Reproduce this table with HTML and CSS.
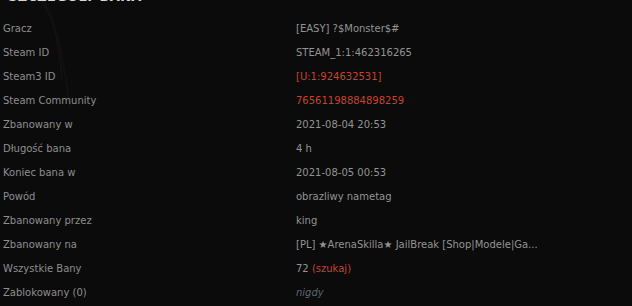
FILE: index.html
```html
<!DOCTYPE html>
<html lang="pl">
<head>
    <meta charset="UTF-8">
    <meta name="viewport" content="width=device-width, initial-scale=1.0">
    <title>Szczegóły bana</title>
    <link rel="stylesheet" href="styles.css">
</head>
<body>
    <div class="panel">
        <svg class="swirl" width="160" height="120" viewBox="0 0 160 120">
            <path d="M36 0 C 50 20, 60 40, 70 120" />
            <path d="M40 10 C 52 25, 58 45, 62 90" />
        </svg>
        <h2 class="title">SZCZEGÓŁY BANA</h2>

        <div class="details">
            <div class="row"><span class="label">Gracz</span><span class="value">[EASY] ?$Monster$#</span></div>
            <div class="row"><span class="label">Steam ID</span><span class="value">STEAM_1:1:462316265</span></div>
            <div class="row"><span class="label">Steam3 ID</span><span class="value red">[U:1:924632531]</span></div>
            <div class="row"><span class="label">Steam Community</span><span class="value red">76561198884898259</span></div>
            <div class="row"><span class="label">Zbanowany w</span><span class="value">2021-08-04 20:53</span></div>
            <div class="row"><span class="label">Długość bana</span><span class="value">4 h</span></div>
            <div class="row"><span class="label">Koniec bana w</span><span class="value">2021-08-05 00:53</span></div>
            <div class="row"><span class="label">Powód</span><span class="value">obrazliwy nametag</span></div>
            <div class="row"><span class="label">Zbanowany przez</span><span class="value">king</span></div>
            <div class="row"><span class="label">Zbanowany na</span><span class="value">[PL] ★ArenaSkilla★ JailBreak [Shop|Modele|Ga...</span></div>
            <div class="row"><span class="label">Wszystkie Bany</span><span class="value">72 <span class="red">(szukaj)</span></span></div>
            <div class="row"><span class="label">Zablokowany (0)</span><span class="value muted">nigdy</span></div>
        </div>
    </div>
</body>
</html>
```

FILE: styles.css
```css
body {
    margin: 0;
    padding: 0;
    background-color: #0b0b0b;
    font-family: "DejaVu Sans", Verdana, sans-serif;
    font-size: 10px;
    color: #8e8e8e;
    overflow: hidden;
}

.panel {
    position: relative;
    padding: 0 3px;
}

.swirl {
    position: absolute;
    top: 0;
    left: 0;
    fill: none;
    stroke: #111111;
    stroke-width: 2;
}

.title {
    position: relative;
    margin: -11px 0 0 5px;
    height: 15px;
    font-size: 13px;
    line-height: 15px;
    font-weight: bold;
    color: #d8d8d8;
    letter-spacing: 0.3px;
}

.details {
    position: relative;
    margin-top: 13px;
}

.row {
    display: grid;
    grid-template-columns: 293px 1fr;
    height: 24px;
    line-height: 24px;
}

.value {
    color: #939393;
    white-space: nowrap;
}

.red {
    color: #c9412f;
}

.muted {
    color: #5c6670;
    font-style: italic;
}
```
